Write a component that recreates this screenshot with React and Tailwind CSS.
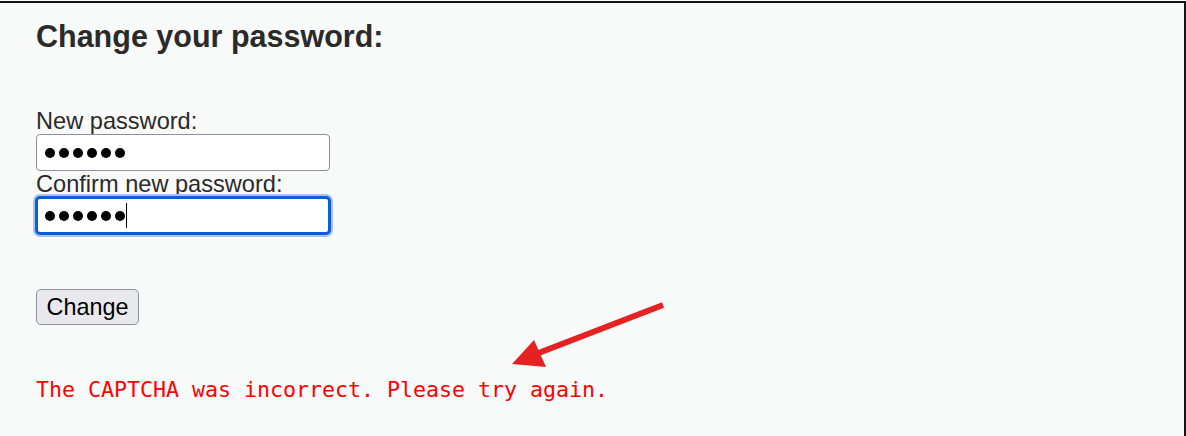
import React from 'react';

const Dots = ({ count = 6 }) => (
  <div className="flex items-center gap-[4px]">
    {Array.from({ length: count }).map((_, i) => (
      <span key={i} className="block w-[10px] h-[10px] rounded-full bg-black"></span>
    ))}
  </div>
);

const App = () => {
  return (
    <div className="relative w-[1186px] h-[436px] bg-white pt-px overflow-hidden">
      <div
        className="h-full w-[1186px] bg-[#f8f9f9] border-t-2 border-r-2 border-[#151515] pl-[36px] pt-[16px]"
        style={{ fontFamily: '"Liberation Sans", Arial, sans-serif' }}
      >
        <h2 className="text-[30.5px] leading-[34px] font-bold text-[#2a2a2a]">Change your password:</h2>

        <form className="mt-[55px] flex flex-col items-start" onSubmit={(e) => e.preventDefault()}>
          <label className="text-[23.6px] leading-[26px] text-[#2a2a2a]">New password:</label>
          <div className="h-[37px] w-[294px] bg-white border border-[#8f8f9d] rounded-[4px] pl-[8px] flex items-center">
            <Dots />
          </div>

          <label className="text-[23.6px] leading-[26px] text-[#2a2a2a]">Confirm new password:</label>
          <div className="h-[37px] w-[294px] bg-white border-2 border-[#0a5fd9] rounded-[4px] pl-[7px] flex items-center shadow-[0_0_0_1px_#0a5fd9,0_0_0_3px_#a9c2ee]">
            <Dots />
            <span className="block w-px h-[25px] bg-black ml-px"></span>
          </div>

          <button
            type="submit"
            className="mt-[55px] h-[36px] w-[103px] bg-[#e9e9ed] border border-[#8f8f9d] rounded-[5px] text-[23.4px] leading-[26px] text-black"
          >
            Change
          </button>
        </form>

        <p
          className="mt-[52px] text-[21.6px] leading-[26px] text-[#ff0000] whitespace-pre"
          style={{ fontFamily: '"DejaVu Sans Mono", "Liberation Mono", monospace' }}
        >
          The CAPTCHA was incorrect. Please try again.
        </p>
      </div>

      {/* annotation arrow */}
      <svg className="absolute left-0 top-0 pointer-events-none" width="1186" height="436" viewBox="0 0 1186 436">
        <line x1="663" y1="305" x2="536" y2="354" stroke="#e52222" strokeWidth="6" />
        <polygon points="512,364 534,340 546,367" fill="#e52222" />
      </svg>
    </div>
  );
};

export default App;
